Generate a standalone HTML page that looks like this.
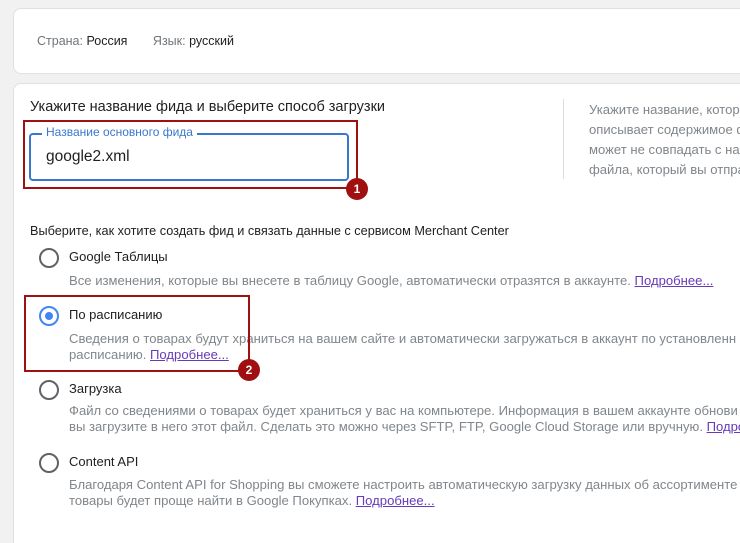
<!DOCTYPE html>
<html><head><meta charset="utf-8"><style>
html,body{margin:0;width:740px;height:543px;overflow:hidden}
body{background:#f1f1f1;font-family:"Liberation Sans",sans-serif;position:relative;color:#202124}
.card{position:absolute;background:#fff;border:1px solid #e0e0e0;border-radius:8px}
.a{position:absolute;white-space:nowrap}
.l{color:#202124;font-size:13px}
.d{color:#80868b;font-size:13.1px;line-height:16px}
.lk{color:#673ab7;text-decoration:underline}
.r{position:absolute;width:16px;height:16px;border:2px solid #5f6368;border-radius:50%}
.red{position:absolute;border:2px solid #a01010}
.badge{position:absolute;width:22px;height:22px;border-radius:50%;background:#a01010;color:#fff;font-weight:bold;font-size:12px;text-align:center;line-height:22px}
</style></head><body>
<div class="card" style="left:13px;top:8px;width:760px;height:64px"></div>
<div class="a" style="left:37px;top:34px;font-size:12.5px"><span style="color:#70757a">Страна:</span> Россия <span style="color:#70757a;margin-left:22px">Язык:</span> русский</div>
<div class="card" style="left:13px;top:83px;width:760px;height:480px"></div>
<div class="a" style="left:30px;top:99px;font-size:14.5px;color:#202124">Укажите название фида и выберите способ загрузки</div>
<div style="position:absolute;left:563px;top:99px;width:1px;height:80px;background:#dadce0"></div>
<div class="a d" style="left:589px;top:100px;line-height:20px">Укажите название, котор<br>описывает содержимое ф<br>может не совпадать с на<br>файла, который вы отпра</div>
<div style="position:absolute;left:29px;top:133px;width:316px;height:44px;border:2px solid #3a78cc;border-radius:4px"></div>
<div class="a" style="left:42px;top:125px;background:#fff;padding:0 4px;font-size:12px;color:#3a78cc">Название основного фида</div>
<div class="a" style="left:46px;top:148px;font-size:15.5px;color:#202124">google2.xml</div>
<div class="red" style="left:23px;top:120px;width:331px;height:65px"></div>
<div class="badge" style="left:346px;top:178px">1</div>
<div class="a l" style="left:30px;top:224px;font-size:12.7px">Выберите, как хотите создать фид и связать данные с сервисом Merchant Center</div>
<div class="r" style="left:39px;top:248px"></div>
<div class="a l" style="left:69px;top:249px">Google Таблицы</div>
<div class="a d" style="left:69px;top:273px">Все изменения, которые вы внесете в таблицу Google, автоматически отразятся в аккаунте. <span class="lk">Подробнее...</span></div>
<div class="r" style="left:39px;top:306px;border-color:#4285f4"></div>
<div style="position:absolute;left:45px;top:312px;width:8px;height:8px;border-radius:50%;background:#4285f4"></div>
<div class="a l" style="left:69px;top:307px">По расписанию</div>
<div class="a d" style="left:69px;top:331px">Сведения о товарах будут храниться на вашем сайте и автоматически загружаться в аккаунт по установленн<br>расписанию. <span class="lk">Подробнее...</span></div>
<div class="red" style="left:24px;top:295px;width:222px;height:73px"></div>
<div class="badge" style="left:238px;top:359px">2</div>
<div class="r" style="left:39px;top:380px"></div>
<div class="a l" style="left:69px;top:381px">Загрузка</div>
<div class="a d" style="left:69px;top:403px">Файл со сведениями о товарах будет храниться у вас на компьютере. Информация в вашем аккаунте обнови<br>вы загрузите в него этот файл. Сделать это можно через SFTP, FTP, Google Cloud Storage или вручную. <span class="lk">Подроб</span></div>
<div class="r" style="left:39px;top:453px"></div>
<div class="a l" style="left:69px;top:454px">Content API</div>
<div class="a d" style="left:69px;top:477px">Благодаря Content API for Shopping вы сможете настроить автоматическую загрузку данных об ассортименте<br>товары будет проще найти в Google Покупках. <span class="lk">Подробнее...</span></div>
</body></html>
